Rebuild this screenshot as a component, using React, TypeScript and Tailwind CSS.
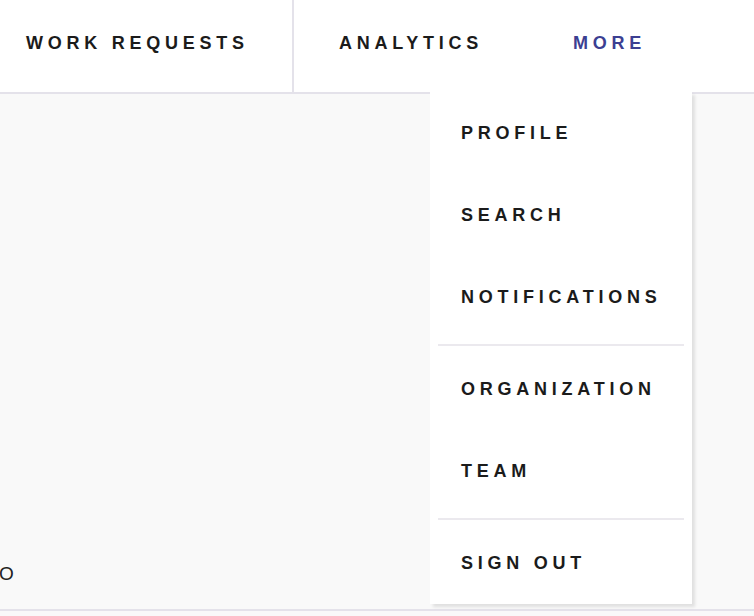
import { useState } from 'react';

const NAV_FONT = { fontFamily: '"Liberation Sans", Arial, sans-serif' };

const menuGroups = [
  ['PROFILE', 'SEARCH', 'NOTIFICATIONS'],
  ['ORGANIZATION', 'TEAM'],
  ['SIGN OUT'],
];

function MoreMenu() {
  return (
    <div className="absolute left-[430px] top-[92px] z-10 w-[262px] bg-white shadow-[3px_3px_3px_rgba(0,0,0,0.1)]">
      {menuGroups.map((group, gi) => (
        <div key={gi}>
          {gi > 0 && <div className="mx-[8px] h-[2px] bg-[#ebe9ee]" />}
          <ul className={gi > 0 ? 'pt-[2px]' : ''}>
            {group.map((label) => (
              <li
                key={label}
                className="flex h-[82px] cursor-pointer items-center pl-[31px] text-[18px] font-bold tracking-[4.75px] text-[#1b1b1b]"
              >
                {label}
              </li>
            ))}
          </ul>
          {gi < menuGroups.length - 1 && <div className="h-[6px]" />}
        </div>
      ))}
    </div>
  );
}

export default function App() {
  const [menuOpen] = useState(true);

  return (
    <div className="relative h-[616px] w-full overflow-hidden bg-[#f9f9f9]" style={NAV_FONT}>
      {/* Top nav */}
      <nav className="flex h-[94px] border-b-2 border-[#e4e2ea] bg-white">
        <a className="flex w-[294px] items-center border-r-2 border-[#e4e2ea] pb-[6px] pl-[26px] text-[18px] font-bold tracking-[4.75px] text-[#1b1b1b]">
          WORK REQUESTS
        </a>
        <a className="flex items-center px-[45px] pb-[6px] text-[18px] font-bold tracking-[4.75px] text-[#1b1b1b]">
          ANALYTICS
        </a>
        <a className="flex items-center px-[45px] pb-[6px] text-[18px] font-bold tracking-[4.75px] text-[#3c3f92]">
          MORE
        </a>
      </nav>

      {/* Page body */}
      <main className="flex h-[517px] flex-col justify-end border-b-2 border-[#e4e2ea] pb-[24px]">
        <p className="-ml-[1px] text-[19px] leading-[22px] text-[#222]">O</p>
      </main>

      {menuOpen && <MoreMenu />}
    </div>
  );
}
